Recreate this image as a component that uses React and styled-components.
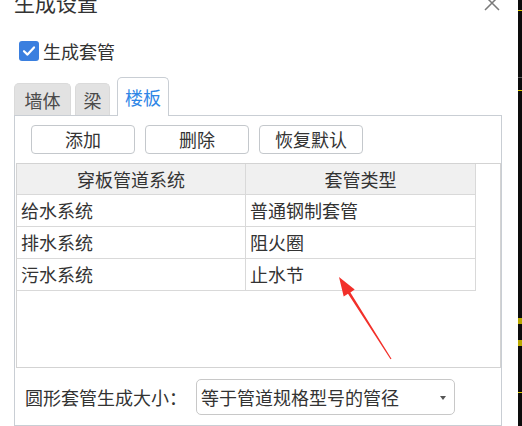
import React from "react";
import styled, { createGlobalStyle } from "styled-components";

const Global = createGlobalStyle`
  html, body { margin: 0; padding: 0; background: #fff; }
  body {
    font-family: "Noto Sans CJK SC", "Microsoft YaHei", "Noto Sans", sans-serif;
    color: #333;
    overflow: hidden;
  }
`;

const Root = styled.div`
  position: relative;
  display: flex;
  width: 522px;
  height: 426px;
  overflow: hidden;
`;

const Dialog = styled.div`
  position: relative;
  width: 518px;
  height: 426px;
  background: #fff;
  display: flex;
  flex-direction: column;
  overflow: hidden;
`;

const Strip = styled.div`
  width: 4px;
  height: 426px;
  background:
    linear-gradient(#0c0c0c 0 10px, #d8c800 10px 11px, #0c0c0c 11px 77px, #555 77px 78px,
      #0c0c0c 78px 90px, #d8c800 90px 91px, #0c0c0c 91px 318px, #b8a800 318px 324px,
      #0c0c0c 324px 340px, #b8a800 340px 346px, #0c0c0c 346px 392px, #d8c800 392px 393px,
      #0c0c0c 393px);
`;

const TitleBar = styled.div`
  margin-top: -8px;
  height: 21px;
  padding: 0 18px 0 14px;
  display: flex;
  align-items: center;
  justify-content: space-between;
  flex-shrink: 0;
`;

const Title = styled.div`
  font-size: 21px;
  line-height: 21px;
  color: #333;
`;

const CheckRow = styled.label`
  margin-top: 27px;
  height: 22px;
  padding-left: 19px;
  display: flex;
  align-items: center;
  gap: 4px;
  font-size: 18px;
  line-height: 22px;
  color: #333;
  flex-shrink: 0;
`;

const CheckBox = styled.span`
  width: 20px;
  height: 20px;
  border-radius: 3px;
  background: #3a7fdf;
  display: flex;
  align-items: center;
  justify-content: center;
`;

const Tabs = styled.div`
  margin-top: 15px;
  padding-left: 14px;
  display: flex;
  align-items: flex-end;
  gap: 4px;
  flex-shrink: 0;
  position: relative;
  z-index: 1;
`;

const Tab = styled.div`
  box-sizing: border-box;
  width: ${(p) => p.$w}px;
  height: ${(p) => (p.$active ? 39 : 32)}px;
  margin-left: ${(p) => (p.$active ? 3 : 0)}px;
  margin-bottom: ${(p) => (p.$active ? -1 : 0)}px;
  border: 1px solid ${(p) => (p.$active ? "#c9ced4" : "#dadada")};
  border-bottom: none;
  border-radius: 5px 5px 0 0;
  background: ${(p) => (p.$active ? "#fff" : "#e2e2e2")};
  color: ${(p) => (p.$active ? "#2f86e6" : "#4a4a4a")};
  font-size: 18px;
  display: flex;
  align-items: center;
  justify-content: center;
  padding-bottom: ${(p) => (p.$active ? 1 : 0)}px;
`;

const Panel = styled.div`
  box-sizing: border-box;
  margin-left: 14px;
  width: 488px;
  flex: 1;
  border: 1px solid #c9ced4;
  padding-top: 9px;
  display: flex;
  flex-direction: column;
`;

const ButtonRow = styled.div`
  display: flex;
  gap: 10px;
  padding-left: 16px;
`;

const Button = styled.button`
  box-sizing: border-box;
  width: 104px;
  height: 29px;
  background: #fff;
  border: 1px solid #c4c8cc;
  border-radius: 4px;
  font-family: inherit;
  font-size: 18px;
  line-height: 27px;
  color: #333;
  padding: 0;
`;

const ListBox = styled.div`
  box-sizing: border-box;
  margin: 9px 0 0 1px;
  width: 485px;
  height: 205px;
  border: 1px solid #d3d3d3;
  flex-shrink: 0;
`;

const Table = styled.div`
  display: grid;
  grid-template-columns: 229px 230px;
  width: 459px;
`;

const Cell = styled.div`
  box-sizing: border-box;
  height: ${(p) => (p.$head ? 31 : 32)}px;
  border-right: 1px solid #d9d9d9;
  border-bottom: 1px solid #d9d9d9;
  background: ${(p) => (p.$head ? "#f0f0f0" : "#fff")};
  text-align: ${(p) => (p.$head ? "center" : "left")};
  padding-left: ${(p) => (p.$head ? 0 : 4)}px;
  font-size: 18px;
  line-height: ${(p) => (p.$head ? 31 : 31)}px;
  color: #333;
  white-space: nowrap;
`;

const BottomRow = styled.div`
  display: flex;
  align-items: center;
  gap: 9px;
  padding: 11px 0 0 10px;
`;

const Label = styled.span`
  font-size: 18px;
  line-height: 22px;
  color: #333;
`;

const Select = styled.div`
  box-sizing: border-box;
  width: 259px;
  height: 36px;
  border: 1px solid #c8c8c8;
  border-radius: 5px;
  display: flex;
  align-items: center;
  justify-content: space-between;
  padding: 0 8px 0 4px;
  font-size: 18px;
  color: #333;
`;

const Caret = styled.span`
  width: 0;
  height: 0;
  border-left: 3px solid transparent;
  border-right: 3px solid transparent;
  border-top: 4px solid #555;
  margin-top: 1px;
`;

const Overlay = styled.svg`
  position: absolute;
  left: 0;
  top: 0;
  width: 518px;
  height: 426px;
  pointer-events: none;
  z-index: 5;
`;

const rows = [
  ["给水系统", "普通钢制套管"],
  ["排水系统", "阻火圈"],
  ["污水系统", "止水节"],
];

export default function App() {
  return (
    <Root>
      <Global />
      <Dialog>
        <TitleBar>
          <Title>生成设置</Title>
          <svg width="16" height="16" viewBox="0 0 16 16">
            <path d="M1 1L15 15M15 1L1 15" stroke="#7a7a7a" strokeWidth="1.5" fill="none" />
          </svg>
        </TitleBar>
        <CheckRow>
          <CheckBox>
            <svg width="14" height="14" viewBox="0 0 14 14">
              <path d="M2 7.2L5.5 10.6L12 3.4" stroke="#fff" strokeWidth="2.2" fill="none" strokeLinecap="round" strokeLinejoin="round" />
            </svg>
          </CheckBox>
          生成套管
        </CheckRow>
        <Tabs>
          <Tab $w={57}>墙体</Tab>
          <Tab $w={35}>梁</Tab>
          <Tab $w={52} $active>楼板</Tab>
        </Tabs>
        <Panel>
          <ButtonRow>
            <Button>添加</Button>
            <Button>删除</Button>
            <Button>恢复默认</Button>
          </ButtonRow>
          <ListBox>
            <Table>
              <Cell $head>穿板管道系统</Cell>
              <Cell $head>套管类型</Cell>
              {rows.map(([a, b]) => (
                <React.Fragment key={a}>
                  <Cell>{a}</Cell>
                  <Cell>{b}</Cell>
                </React.Fragment>
              ))}
            </Table>
          </ListBox>
          <BottomRow>
            <Label>圆形套管生成大小：</Label>
            <Select>
              <span>等于管道规格型号的管径</span>
              <Caret />
            </Select>
          </BottomRow>
        </Panel>
        <Overlay viewBox="0 0 518 426">
          <polygon
            points="339,277 354.7,289.6 350.4,292.4 391.5,358.7 390.5,359.3 348.0,293.8 343.7,296.6"
            fill="#f2302a"
          />
        </Overlay>
      </Dialog>
      <Strip />
    </Root>
  );
}
